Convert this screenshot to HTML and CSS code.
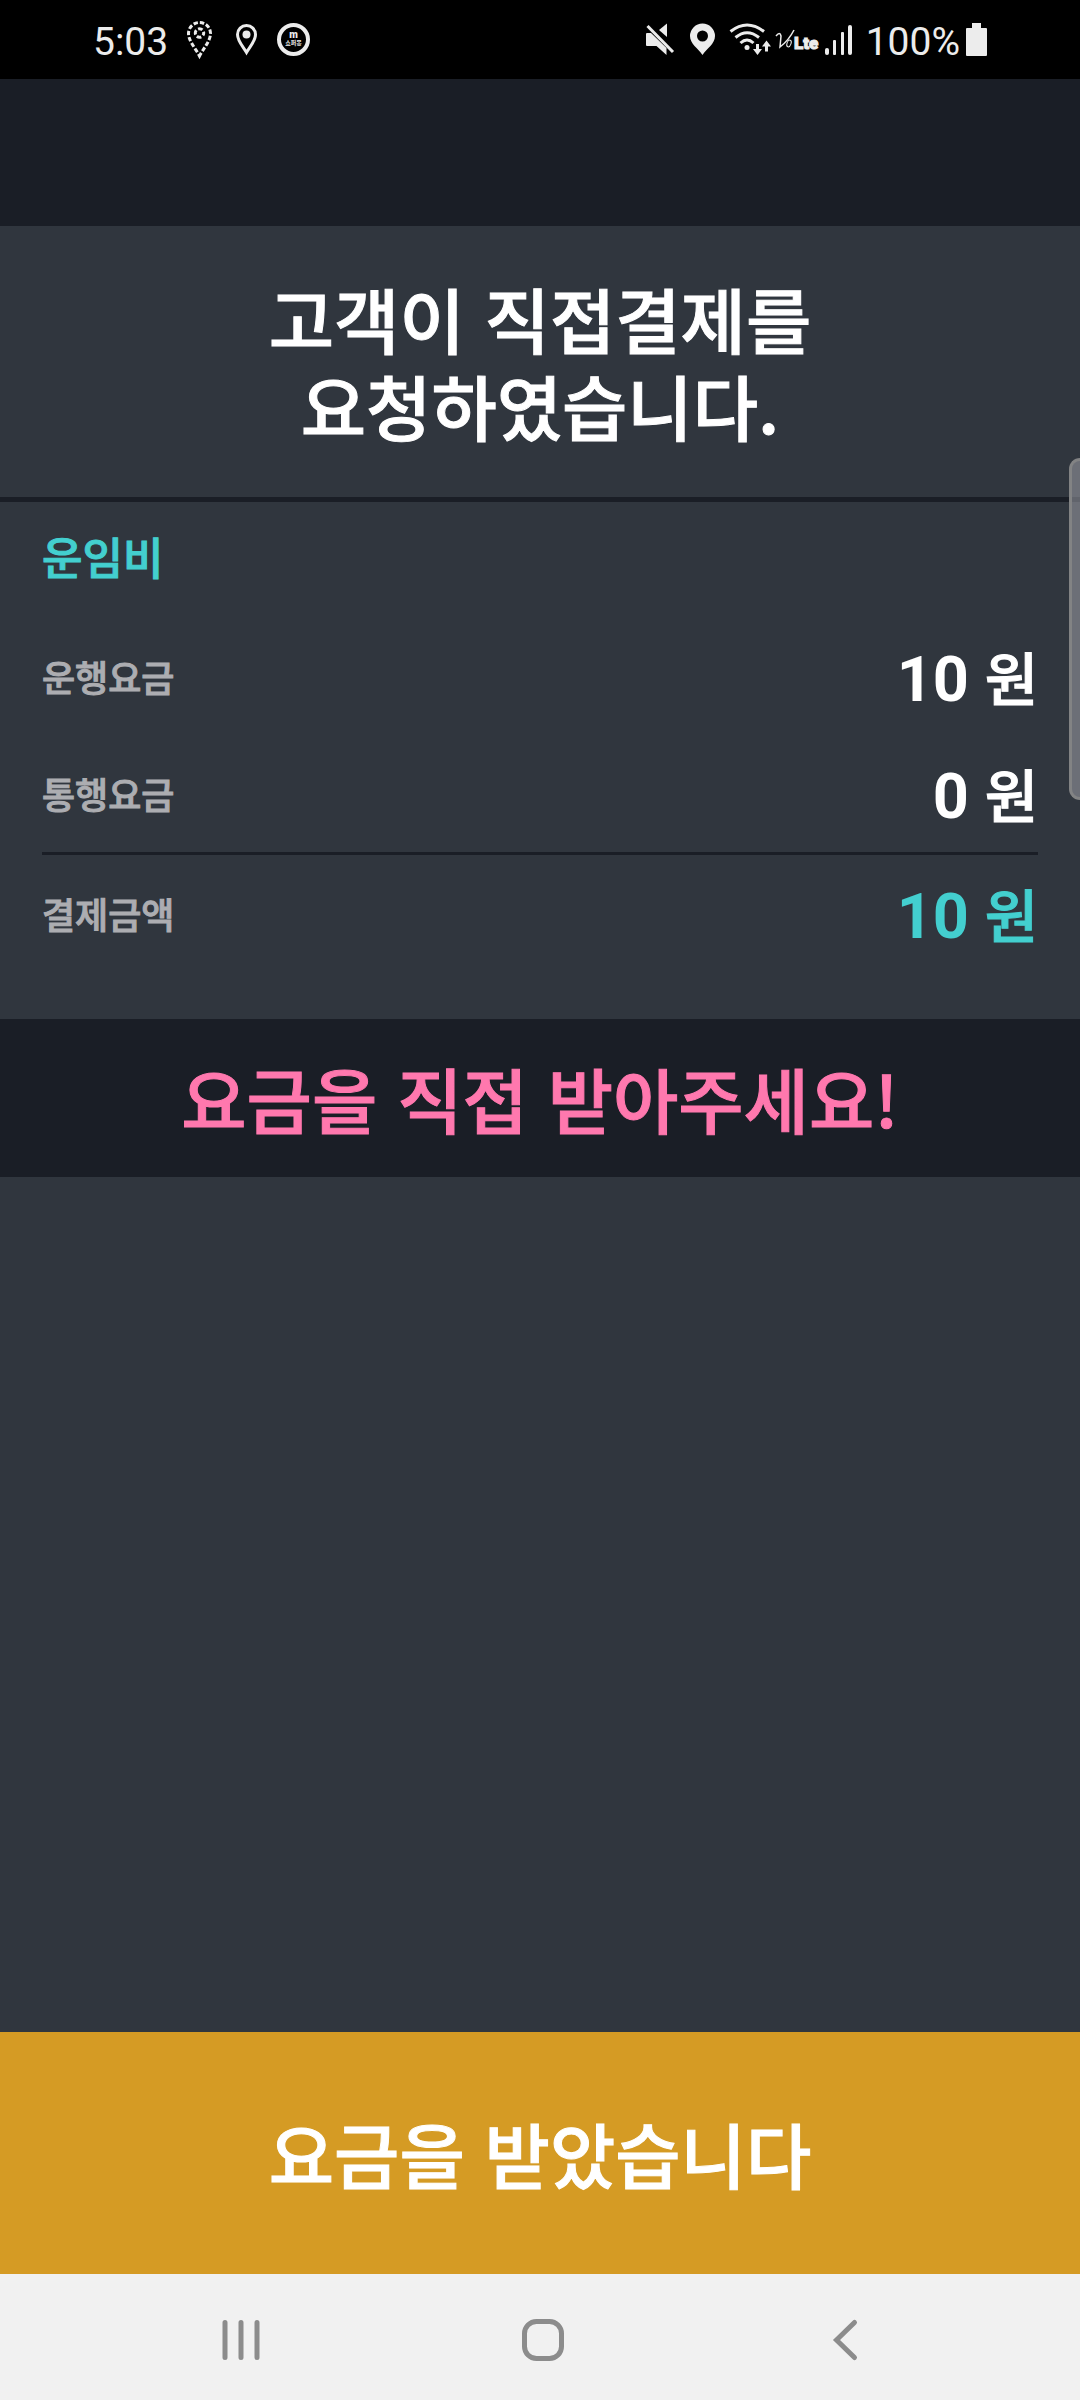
FILE: index.html
```html
<!DOCTYPE html>
<html lang="ko">
<head>
<meta charset="utf-8">
<meta name="viewport" content="width=device-width, initial-scale=1">
<title>직접결제 요청</title>
<link rel="stylesheet" href="styles.css">
</head>
<body>
<div class="screen">
  <header class="status">
    <div class="status-left">
      <span class="status-text">5:03</span>
      <svg class="status-icon" width="30" height="41" viewBox="186 19 30 41" fill="none" stroke="#ececec" stroke-width="3" aria-hidden="true">
        <path d="M199.500 56C196 49 188.500 41 188.500 33.500a11 11 0 0 1 22 0C210.500 41 203 49 199.500 56Z" stroke-dasharray="4.400 2" stroke-dashoffset="2"/>
        <circle cx="199.500" cy="33" r="4.200" stroke-dasharray="4.600 2" stroke-dashoffset="2"/>
      </svg>
      <svg class="status-icon" width="25" height="41" viewBox="234 19 25 41" aria-hidden="true">
        <path d="M246.500 52.500C243 46.500 237.500 41 237.500 34.500a9 9 0 0 1 18 0C255.500 41 250 46.500 246.500 52.500Z" fill="none" stroke="#ececec" stroke-width="3"/>
        <circle cx="246.500" cy="34.500" r="4" fill="#ececec"/>
      </svg>
      <svg class="status-icon" width="33" height="41" viewBox="277 19 33 41" aria-hidden="true">
        <circle cx="293.500" cy="39.500" r="14.500" fill="none" stroke="#ececec" stroke-width="4"/>
        <text class="badge-m" x="293.500" y="38" text-anchor="middle">m</text>
        <text class="badge-name" x="293.500" y="45" text-anchor="middle">쇼퍼몽</text>
      </svg>
    </div>
    <div class="status-right">
      <svg class="status-icon" width="38" height="41" viewBox="644 19 38 41" fill="#ececec" aria-hidden="true">
        <path d="M647 33h4l15.500 15v7l-10-9h-9.500a1 1 0 0 1-1-1V34a1 1 0 0 1 1-1Z"/>
        <path d="M659 30l8-6.500V37Z"/>
        <path d="M647.500 26l25.500 26" stroke="#ececec" stroke-width="3"/>
      </svg>
      <svg class="status-icon" width="36" height="41" viewBox="686 19 36 41" fill="#ececec" aria-hidden="true">
        <path fill-rule="evenodd" d="M702.500 55C698 48 690 44 690 36a12.500 12.500 0 0 1 25 0C715 44 707 48 702.500 55ZM702.500 30.500a5.500 5.500 0 1 0 0 11a5.500 5.500 0 0 0 0-11Z"/>
      </svg>
      <svg class="status-icon" width="45" height="41" viewBox="726 19 45 41" fill="none" stroke="#ececec" stroke-width="3" aria-hidden="true">
        <path d="M730.500 31.500Q747 18.500 764 31.500M735.500 37.500Q747 28 759 37.500M740.500 43Q747 37 753.500 43"/>
        <circle cx="747" cy="47.500" r="2.500" fill="#ececec" stroke="none"/>
        <path d="M757.500 44v8M766.500 51.500v-8"/>
        <path d="M753 49h9l-4.500 6ZM762 46.500h9l-4.500-6Z" fill="#ececec" stroke="none"/>
      </svg>
      <svg class="status-icon" width="44" height="41" viewBox="775 19 44 41" fill="#ececec" aria-hidden="true">
        <path d="M776 36q4-5 5 0l-1 11q9-7 14-17" fill="none" stroke="#ececec" stroke-width="1.500"/>
        <ellipse cx="789" cy="43.500" rx="2" ry="3.500" transform="rotate(20 789 43.500)" fill="none" stroke="#ececec" stroke-width="1"/>
        <text class="volte" x="794" y="49">Lte</text>
      </svg>
      <svg class="status-icon" width="39" height="41" viewBox="823 19 39 41" fill="#ececec" aria-hidden="true">
        <rect x="825" y="48" width="4" height="7" rx="2"/>
        <rect x="833" y="40" width="3" height="15" rx="1"/>
        <rect x="841" y="32" width="3" height="23" rx="1"/>
        <rect x="848" y="25" width="4" height="30" rx="2"/>
      </svg>
      <span class="status-text">100%</span>
      <svg class="status-icon" width="24" height="41" viewBox="964 19 24 41" fill="#ececec" aria-hidden="true">
        <path d="M972 23h9v5h5a1 1 0 0 1 1 1v26a1 1 0 0 1-1 1h-19a1 1 0 0 1-1-1V29a1 1 0 0 1 1-1h5Z"/>
      </svg>
    </div>
  </header>
  <main class="main">
    <div class="appbar"></div>
    <h1 class="notice">고객이 직접결제를<br>요청하였습니다.</h1>
    <section class="fare">
      <h2 class="fare-title">운임비</h2>
      <dl class="fare-list">
        <div class="fare-row"><dt>운행요금</dt><dd>10 <span class="unit">원</span></dd></div>
        <div class="fare-row"><dt>통행요금</dt><dd>0 <span class="unit">원</span></dd></div>
        <div class="fare-row fare-total"><dt>결제금액</dt><dd>10 <span class="unit">원</span></dd></div>
      </dl>
    </section>
    <p class="alert">요금을 직접 받아주세요!</p>
  </main>
  <button class="confirm" type="button">요금을 받았습니다</button>
  <nav class="navbar">
    <button class="nav-button" type="button" aria-label="최근 앱">
      <svg width="44" height="44" viewBox="0 0 44 44" fill="none" stroke="#8c8c8c" stroke-width="5" stroke-linecap="round"><path d="M6 4.500v35M22 4.500v35M38 4.500v35"/></svg>
    </button>
    <button class="nav-button" type="button" aria-label="홈">
      <svg width="44" height="44" viewBox="0 0 44 44" fill="none" stroke="#8c8c8c" stroke-width="5"><rect x="3.500" y="3.500" width="37" height="37" rx="12"/></svg>
    </button>
    <button class="nav-button" type="button" aria-label="뒤로">
      <svg width="44" height="44" viewBox="0 0 44 44" fill="none" stroke="#8c8c8c" stroke-width="5" stroke-linecap="round"><path d="M31.500 4.500L13.500 22L31.500 39.500"/></svg>
    </button>
  </nav>
  <div class="edge-handle"></div>
</div>
</body>
</html>
```
FILE: styles.css
```css
* {
  box-sizing: border-box;
}

body {
  margin: 0;
  font-family: "Noto Sans CJK KR", sans-serif;
  font-weight: 500;
  color: #ffffff;
  background: #30363e;
}

h1, h2, p, dl, dd {
  margin: 0;
}

button {
  border: 0;
  padding: 0;
  font: inherit;
  color: inherit;
  background: none;
}

/* Semi-bold Hangul: medium weight with a thin outline */
.notice,
.fare-title,
.fare-row dt,
.unit,
.alert,
.confirm {
  font-weight: 500;
  -webkit-text-stroke: 1px currentColor;
}

.screen {
  position: relative;
  display: flex;
  flex-direction: column;
  min-height: 100vh;
}

.status {
  display: flex;
  align-items: center;
  justify-content: space-between;
  height: 79px;
  padding: 0 92px 0 93px;
  background: #000000;
}

.status-left,
.status-right {
  display: flex;
  align-items: center;
}

.status-left {
  gap: 18px;
}

.status-right {
  gap: 4px;
}

.status-icon {
  display: block;
  flex: none;
}

.status-text {
  font: 400 39px/44px Roboto, sans-serif;
  color: #ececec;
  padding-top: 4px;
}

.badge-m {
  font: 900 10px Roboto, sans-serif;
  fill: #ececec;
}

.badge-name {
  font: 700 6px "Noto Sans CJK KR", sans-serif;
  fill: #ececec;
}

.volte {
  font: 900 17px Roboto, sans-serif;
  stroke: #ececec;
  stroke-width: 1px;
}

.main {
  flex: 1;
}

.appbar {
  height: 147px;
  background: #1a1e26;
}

.notice {
  padding: 48px 42px 49px;
  border-bottom: 5px solid #1a1e26;
  font-size: 71px;
  line-height: 87px;
  text-align: center;
}

.fare {
  padding: 16px 42px 47px;
}

.fare-title {
  padding-bottom: 24px;
  font-size: 44px;
  line-height: 76px;
  color: #43cfcf;
}

.fare-row {
  display: flex;
  align-items: center;
  justify-content: space-between;
  height: 117px;
  padding-bottom: 2px;
}

.fare-row dt {
  font-size: 36px;
  color: #acadb1;
}

.fare-row dd {
  padding-top: 5px;
  font-family: Roboto, sans-serif;
  font-size: 63px;
  font-weight: 700;
  line-height: 80px;
}

.unit {
  font-family: "Noto Sans CJK KR", sans-serif;
  font-size: 58px;
}

.fare-total {
  height: 120px;
  border-top: 3px solid #1a1e26;
}

.fare-total dd {
  color: #43cfcf;
}

.alert {
  padding: 31px 42px 33px;
  font-size: 71px;
  line-height: 94px;
  text-align: center;
  color: #ff78ae;
  background: #1a1e26;
}

.confirm {
  padding: 73px 42px 75px;
  font-size: 71px;
  line-height: 94px;
  text-align: center;
  background: #d59b24;
}

.navbar {
  display: grid;
  grid-template-columns: repeat(3, 1fr);
  height: 126px;
  padding: 6px 84px 0 90px;
  background: #f1f1f1;
}

.nav-button {
  display: flex;
  align-items: center;
  justify-content: center;
}

/* Side panel handle that floats over the page edge */
.edge-handle {
  position: absolute;
  top: 458px;
  right: 0;
  width: 11px;
  height: 342px;
  border: 3px solid #828384;
  border-right: 0;
  border-radius: 12px 0 0 12px;
  background: rgba(158, 160, 168, 0.540);
}
```
